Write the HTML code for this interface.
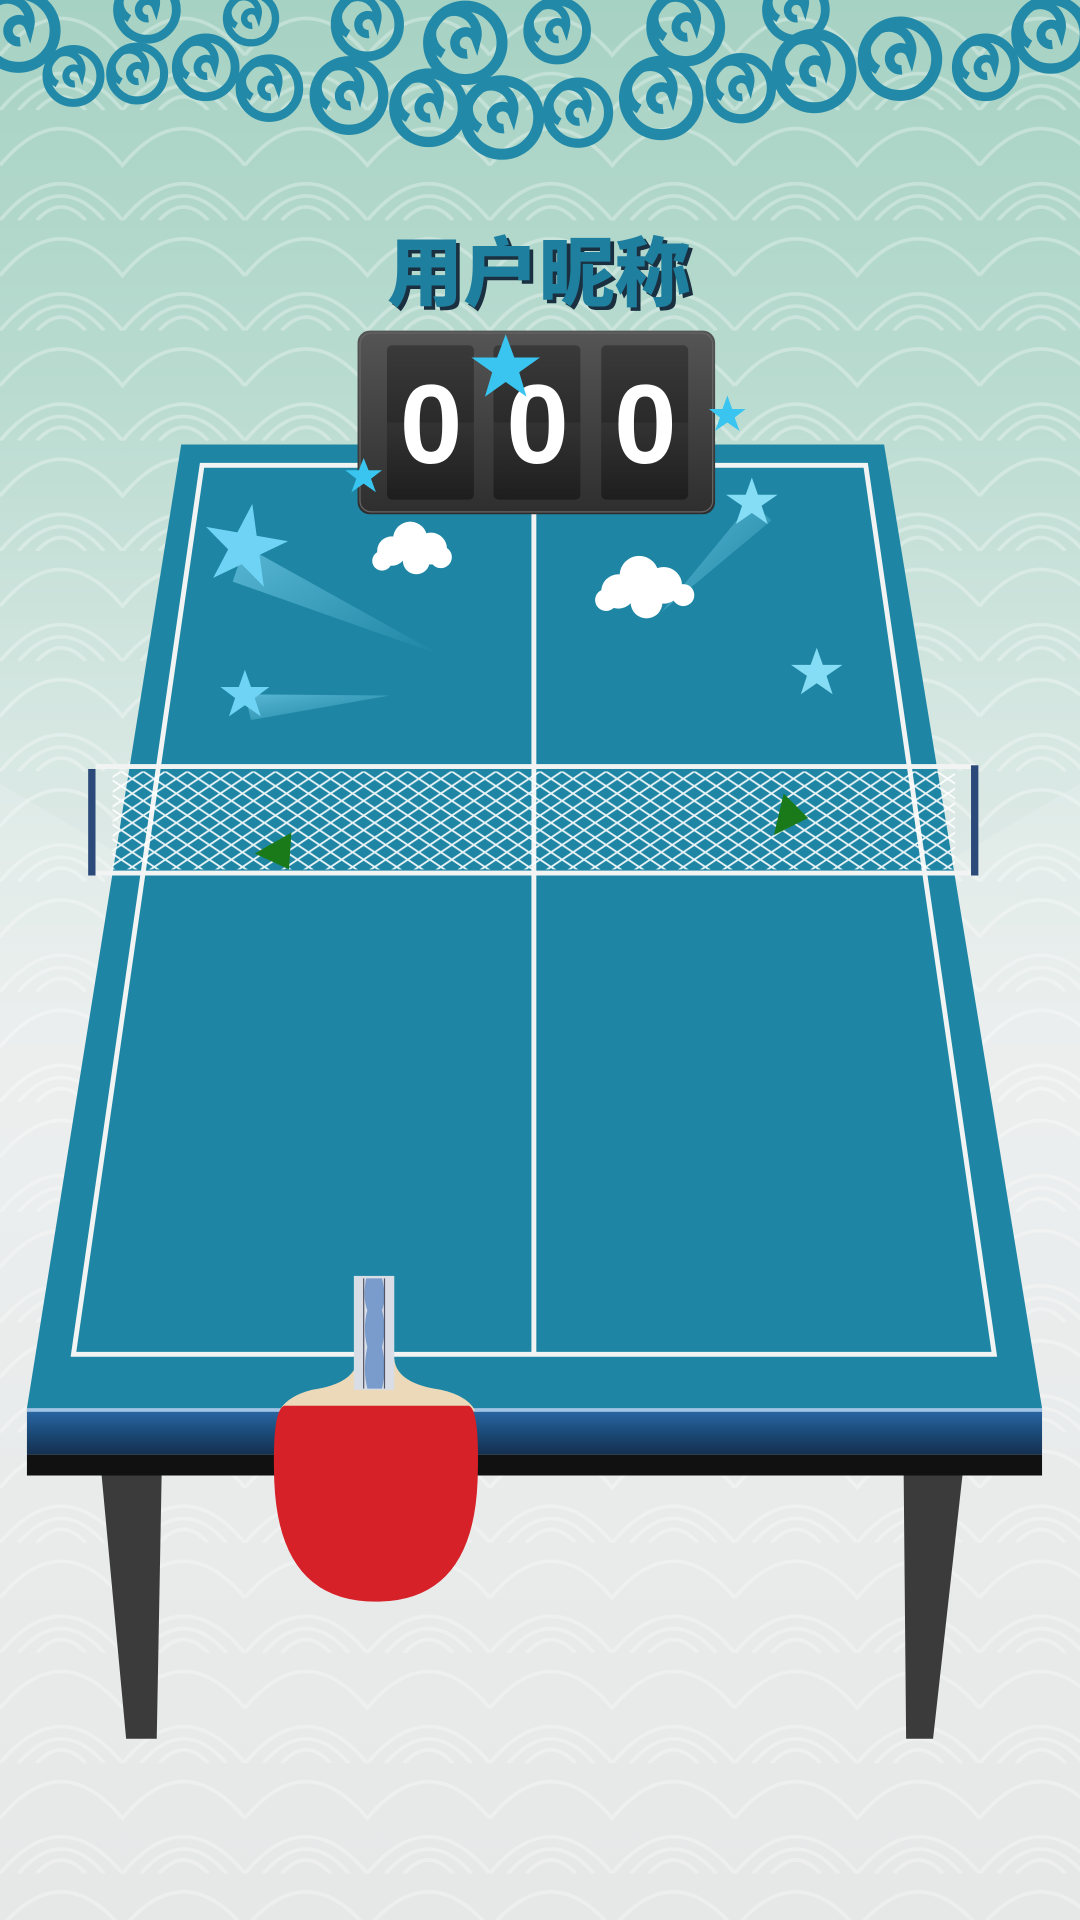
<!DOCTYPE html>
<html><head><meta charset="utf-8"><style>
html,body{margin:0;padding:0;width:1080px;height:1920px;overflow:hidden;background:#e6eaea}
svg{display:block}
</style></head><body>
<svg width="1080" height="1920" viewBox="0 0 882 1568" xmlns="http://www.w3.org/2000/svg">
<defs>
<linearGradient id="bg" x1="0" y1="0" x2="0" y2="1">
<stop offset="0" stop-color="#a6d2c3"/><stop offset="0.2" stop-color="#b9dbd0"/>
<stop offset="0.38" stop-color="#d6e7e2"/><stop offset="0.55" stop-color="#e9ecec"/>
<stop offset="1" stop-color="#e2e4e4"/></linearGradient>
<pattern id="waves" width="200" height="90" patternUnits="userSpaceOnUse">
<path d="M0,90 Q50,30 100,90 M100,90 Q150,30 200,90 M-100,45 Q-50,-15 0,45 M0,45 Q50,-15 100,45 Q150,-15 200,45 M15,90 Q50,50 85,90 M115,90 Q150,50 185,90 M30,90 Q50,68 70,90 M130,90 Q150,68 170,90" fill="none" stroke="#fff" stroke-opacity="0.3" stroke-width="3"/></pattern>
<pattern id="net" width="18" height="12" patternUnits="userSpaceOnUse">
<path d="M0,0 L18,12 M18,0 L0,12" stroke="#fff" stroke-width="1.5" opacity="0.9"/></pattern>
<linearGradient id="band" x1="0" y1="0" x2="0" y2="1">
<stop offset="0" stop-color="#2c6aa8"/><stop offset="0.5" stop-color="#1b4c7a"/><stop offset="1" stop-color="#152f4f"/></linearGradient>
<linearGradient id="board" x1="0" y1="0" x2="0" y2="1">
<stop offset="0" stop-color="#555"/><stop offset="1" stop-color="#2e2e2e"/></linearGradient>
<linearGradient id="card" x1="0" y1="0" x2="0" y2="1">
<stop offset="0" stop-color="#3a3a3a"/><stop offset="0.5" stop-color="#2a2a2a"/><stop offset="0.5" stop-color="#333"/><stop offset="1" stop-color="#1e1e1e"/></linearGradient>
<linearGradient id="trail" x1="0" y1="0" x2="1" y2="1">
<stop offset="0" stop-color="#7fd6f2" stop-opacity="0.6"/><stop offset="1" stop-color="#7fd6f2" stop-opacity="0"/></linearGradient>
<g id="sw"><path d="M0.05,0.3 A0.3,0.3 0 1 1 0.3,-0.1 A0.62,0.62 0 1 0 -0.6,0.3" fill="none" stroke="#2389a8" stroke-width="0.26" transform="rotate(0)"/><circle r="1" fill="none" stroke="#2389a8" stroke-width="0.3"/></g>
</defs>
<rect width="882" height="1568" fill="url(#bg)"/>
<rect width="882" height="1568" fill="url(#waves)"/>
<polygon points="0,640 440,900 882,640 882,1568 0,1568" fill="#fff" opacity="0.15"/>
<g>
<use href="#sw" transform="translate(15,25) scale(30)"/>
<use href="#sw" transform="translate(60,62) scale(22)"/>
<use href="#sw" transform="translate(112,60) scale(22)"/>
<use href="#sw" transform="translate(168,55) scale(24)"/>
<use href="#sw" transform="translate(220,72) scale(24)"/>
<use href="#sw" transform="translate(285,78) scale(28)"/>
<use href="#sw" transform="translate(350,88) scale(28)"/>
<use href="#sw" transform="translate(410,96) scale(30)"/>
<use href="#sw" transform="translate(472,92) scale(25)"/>
<use href="#sw" transform="translate(540,80) scale(30)"/>
<use href="#sw" transform="translate(605,72) scale(25)"/>
<use href="#sw" transform="translate(665,58) scale(30)"/>
<use href="#sw" transform="translate(735,48) scale(30)"/>
<use href="#sw" transform="translate(805,55) scale(24)"/>
<use href="#sw" transform="translate(858,28) scale(28)"/>
<use href="#sw" transform="translate(380,35) scale(30)"/>
<use href="#sw" transform="translate(300,20) scale(26)"/>
<use href="#sw" transform="translate(455,25) scale(24)"/>
<use href="#sw" transform="translate(560,22) scale(28)"/>
<use href="#sw" transform="translate(650,8) scale(24)"/>
<use href="#sw" transform="translate(120,8) scale(24)"/>
<use href="#sw" transform="translate(205,15) scale(20)"/>
</g>
<polygon points="83,1205 132,1205 128,1420 103,1420" fill="#3b3b3b"/>
<polygon points="738,1205 786,1205 762,1420 740,1420" fill="#3b3b3b"/>
<polygon points="148,363 722,363 851,1150 22,1150" fill="#1e86a4"/>
<rect x="22" y="1150" width="829" height="38" fill="url(#band)"/>
<rect x="22" y="1150" width="829" height="3" fill="#9fc4e4"/>
<rect x="22" y="1188" width="829" height="17" fill="#111"/>
<g stroke="#f2f4f4" stroke-width="4" fill="none">
<polygon points="165,380 707,380 812,1106 60,1106"/>
<line x1="436" y1="380" x2="436" y2="1106"/>
</g>
<polygon points="200,446 360,535 190,475" fill="url(#trail)"/>
<polygon points="200,567 318,568 205,588" fill="url(#trail)"/>
<polygon points="614,410 540,500 630,425" fill="url(#trail)"/>
<g fill="#6fd3f5">
<polygon points="200,411 208,436 234,436 213,451 221,476 200,461 179,476 187,451 166,436 192,436" transform="rotate(10 200 446)"/>
<polygon points="200,547 205,561 220,561 208,570 213,585 200,576 187,585 192,570 180,561 195,561"/>
<polygon points="614,390 619,404 635,404 622,413 627,428 614,419 601,428 606,413 593,404 609,404" fill="#84dcf5"/>
<polygon points="667,529 672,543 688,543 675,552 680,567 667,558 654,567 659,552 646,543 662,543" fill="#84dcf5"/>
</g>
<g fill="#fff">
<circle cx="320" cy="450" r="12"/><circle cx="335" cy="440" r="14"/><circle cx="352" cy="448" r="13"/><circle cx="340" cy="458" r="11"/><circle cx="312" cy="458" r="8"/><circle cx="360" cy="455" r="9"/>
<circle cx="505" cy="483" r="14"/><circle cx="522" cy="470" r="16"/><circle cx="542" cy="478" r="15"/><circle cx="528" cy="492" r="13"/><circle cx="495" cy="490" r="9"/><circle cx="558" cy="486" r="9"/>
</g>
<rect x="92" y="630" width="688" height="80" fill="url(#net)"/>
<rect x="78" y="624" width="718" height="4" fill="#f2f4f4"/>
<rect x="78" y="711" width="718" height="4" fill="#f2f4f4"/>
<rect x="72" y="628" width="6" height="87" fill="#2b4a7a"/>
<rect x="793" y="625" width="6" height="90" fill="#2b4a7a"/>
<polygon points="208,697 238,680 236,710" fill="#1a7a1a"/>
<polygon points="640,648 660,668 632,682" fill="#1a7a1a"/>
<text x="443" y="248" text-anchor="middle" font-family="'Liberation Sans','Noto Sans CJK SC',sans-serif" font-weight="900" font-size="62" fill="#1a3040">用户昵称</text>
<text x="440" y="245" text-anchor="middle" font-family="'Liberation Sans','Noto Sans CJK SC',sans-serif" font-weight="900" font-size="62" fill="#1f7f9f">用户昵称</text>
<rect x="292" y="270" width="292" height="150" rx="10" fill="url(#board)"/>
<rect x="294" y="272" width="288" height="146" rx="9" fill="none" stroke="#666" stroke-width="1"/>
<rect x="316" y="282" width="71" height="126" rx="4" fill="url(#card)"/>
<rect x="403" y="282" width="71" height="126" rx="4" fill="url(#card)"/>
<rect x="491" y="282" width="71" height="126" rx="4" fill="url(#card)"/>
<g font-family="'Liberation Sans',sans-serif" font-weight="bold" font-size="92" fill="#fff" text-anchor="middle">
<text x="352" y="378">0</text><text x="439" y="378">0</text><text x="527" y="378">0</text>
</g>
<g fill="#39c5f0">
<polygon points="413,273 420,292 441,292 424,304 430,324 413,312 396,324 402,304 385,292 406,292"/>
<polygon points="594,323 598,334 609,334 600,341 604,352 594,345 584,352 588,341 579,334 590,334"/>
<polygon points="297,374 301,384 312,384 303,391 307,402 297,395 287,402 291,391 282,384 293,384"/>
</g>
<path d="M292,1110 Q290,1130 255,1135 Q235,1140 228,1152 L388,1152 Q382,1140 360,1135 Q324,1130 322,1110 Z" fill="#ecd9b9"/>
<rect x="289" y="1042" width="33" height="93" fill="#d8dde6"/>
<path d="M299,1044 Q296,1060 300,1070 Q296,1085 300,1100 Q296,1118 300,1134 L312,1134 Q316,1118 312,1100 Q316,1085 312,1070 Q316,1060 312,1044 Z" fill="#7a9ccc"/>
<line x1="297" y1="1044" x2="297" y2="1134" stroke="#556" stroke-width="1"/>
<line x1="314" y1="1044" x2="314" y2="1134" stroke="#556" stroke-width="1"/>
<path d="M232,1148 H383 Q392,1152 390,1210 Q386,1308 307,1308 Q228,1308 224,1210 Q222,1152 232,1148 Z" fill="#d62128"/>
</svg>
</body></html>
